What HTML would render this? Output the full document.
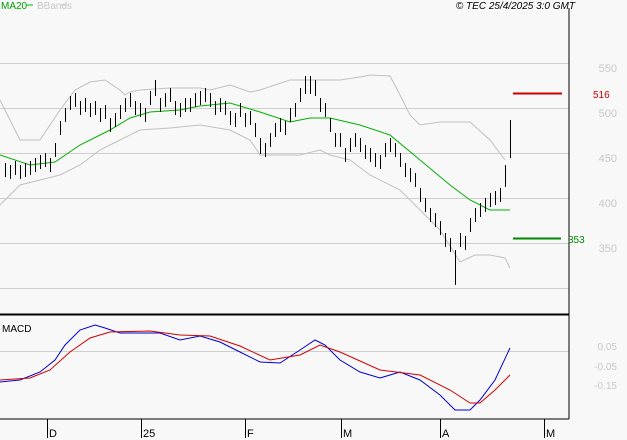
<!DOCTYPE html><html><head><style>body{margin:0;background:#f8f8f8}svg{display:block;font-family:"Liberation Sans",sans-serif}</style></head><body>
<svg width="627" height="440" viewBox="0 0 627 440" xmlns="http://www.w3.org/2000/svg">
<rect width="627" height="440" fill="#f8f8f8"/>
<g stroke="#cfcfcf" stroke-width="1">
<path d="M0 63.5H569M0 108.5H569M0 153.5H569M0 198.5H569M0 243.5H569M0 288.5H569M0 351.5H569"/>
</g>
<g fill="#c8c8c8" font-size="11" text-anchor="end">
<text x="617" y="72">550</text><text x="617" y="117">500</text><text x="617" y="162">450</text><text x="617" y="207">400</text><text x="617" y="252">350</text>
<text x="617" y="350" font-size="10">0.05</text><text x="617" y="370" font-size="10">-0.05</text><text x="617" y="389" font-size="10">-0.15</text>
</g>
<path d="M569 8V419M0 419H569" stroke="#000" fill="none"/>
<path d="M0 314.5H569" stroke="#000" stroke-width="2"/>
<g stroke="#000"><path d="M47.5 419V438M141.5 419V438M245.5 419V438M341.5 419V438M440.5 419V438M544.5 419V438"/></g>
<g font-size="11" fill="#000"><text x="49" y="437">D</text><text x="143" y="437">25</text><text x="247" y="437">F</text><text x="343" y="437">M</text><text x="442" y="437">A</text><text x="546" y="437">M</text></g>
<text x="1" y="9" font-size="10" fill="#00a000">MA20</text><path d="M26 5H33" stroke="#00c000"/>
<text x="37" y="9" font-size="10" fill="#c8c8c8">BBands</text><path d="M60 5H67" stroke="#c8c8c8"/>
<text x="575" y="9" font-size="10" font-style="italic" text-anchor="end" fill="#000">© TEC 25/4/2025 3:0 GMT</text>
<path d="M513 93.5H562" stroke="#c00" stroke-width="2"/>
<text x="593" y="98" font-size="10" fill="#c00">516</text>
<path d="M513 238.5H561" stroke="#080" stroke-width="2"/>
<text x="568" y="243" font-size="10" fill="#080">353</text>
<g fill="none" stroke="#c0c0c0">
<polyline points="0,100 10,120 20,140 40,140 60,110 75,90 90,82 105,80 120,90 125,95 130,92 140,90 170,88 200,88 210,90 230,85 250,92 260,90 290,80 340,80 360,77 370,75 390,76 400,95 410,115 420,125 440,122 470,122 490,140 505,160"/>
<polyline points="0,205 20,185 40,180 60,175 80,165 100,150 120,140 140,130 170,128 200,125 230,130 250,140 260,155 280,155 300,155 320,150 330,155 350,160 370,175 400,190 420,210 440,230 460,262 475,255 490,255 505,258 510,268"/>
</g>
<polyline fill="none" stroke="#00b000" points="0,155 30,165 55,162 80,145 110,130 130,118 150,112 180,110 200,106 230,103 260,112 290,122 310,118 330,118 360,125 390,135 420,160 450,185 470,200 490,210 510,210"/>
<path stroke="#000" fill="none" d="M5.5 163v14M10.5 165v14M15.5 161v14M20.5 165v14M25.5 163v14M30.5 161v14M35.5 158v14M40.5 155v14M45.5 153v14M50.5 158v14M55.5 143v14M60.5 121v14M65.5 108v14M70.5 96v14M75.5 93v14M80.5 101v14M85.5 98v14M90.5 103v14M95.5 101v14M100.5 108v14M105.5 105v14M110.5 118v14M115.5 113v14M120.5 105v14M125.5 98v14M130.5 93v14M135.5 101v14M140.5 103v14M145.5 108v14M150.5 91v14M155.5 80v16M160.5 98v14M165.5 93v14M170.5 88v14M175.5 101v14M180.5 103v14M185.5 98v14M190.5 98v14M195.5 93v14M200.5 91v14M205.5 88v14M210.5 93v14M215.5 101v14M220.5 98v14M225.5 101v14M230.5 111v14M235.5 113v14M240.5 103v14M245.5 113v14M250.5 111v14M255.5 123v14M260.5 138v16M265.5 143v14M270.5 133v14M275.5 123v14M280.5 118v14M285.5 121v14M290.5 108v14M295.5 103v14M300.5 88v14M305.5 76v18M310.5 76v18M315.5 80v16M320.5 98v14M325.5 103v14M330.5 118v14M335.5 133v14M340.5 133v14M345.5 148v14M350.5 138v14M355.5 133v14M360.5 138v14M365.5 145v14M370.5 148v14M375.5 153v14M380.5 155v14M385.5 143v14M390.5 138v14M395.5 143v14M400.5 153v14M405.5 163v14M410.5 168v14M415.5 173v14M420.5 188v14M425.5 198v14M430.5 208v14M435.5 213v14M440.5 221v14M445.5 233v14M450.5 238v14M455.5 250v35M460.5 233v14M465.5 236v14M470.5 218v14M475.5 208v14M480.5 203v14M485.5 198v14M490.5 193v14M495.5 191v14M500.5 188v14M505.5 165v22M510.5 120v38"/>
<polyline fill="none" stroke="#0000d0" points="0,382 20,380 40,372 55,360 65,345 80,330 95,325 105,328 120,333 160,333 180,340 200,336 220,342 240,352 260,362 280,363 300,350 315,340 325,345 340,360 360,372 380,378 400,372 420,380 440,395 455,410 470,410 480,400 495,380 510,348"/>
<polyline fill="none" stroke="#d00000" points="0,380 30,378 50,370 70,352 90,338 110,332 150,331 180,335 210,336 240,346 270,360 300,355 320,345 340,352 380,370 420,375 450,390 470,403 480,403 495,390 510,375"/>
<text x="2" y="332" font-size="10" fill="#000">MACD</text>
</svg></body></html>
